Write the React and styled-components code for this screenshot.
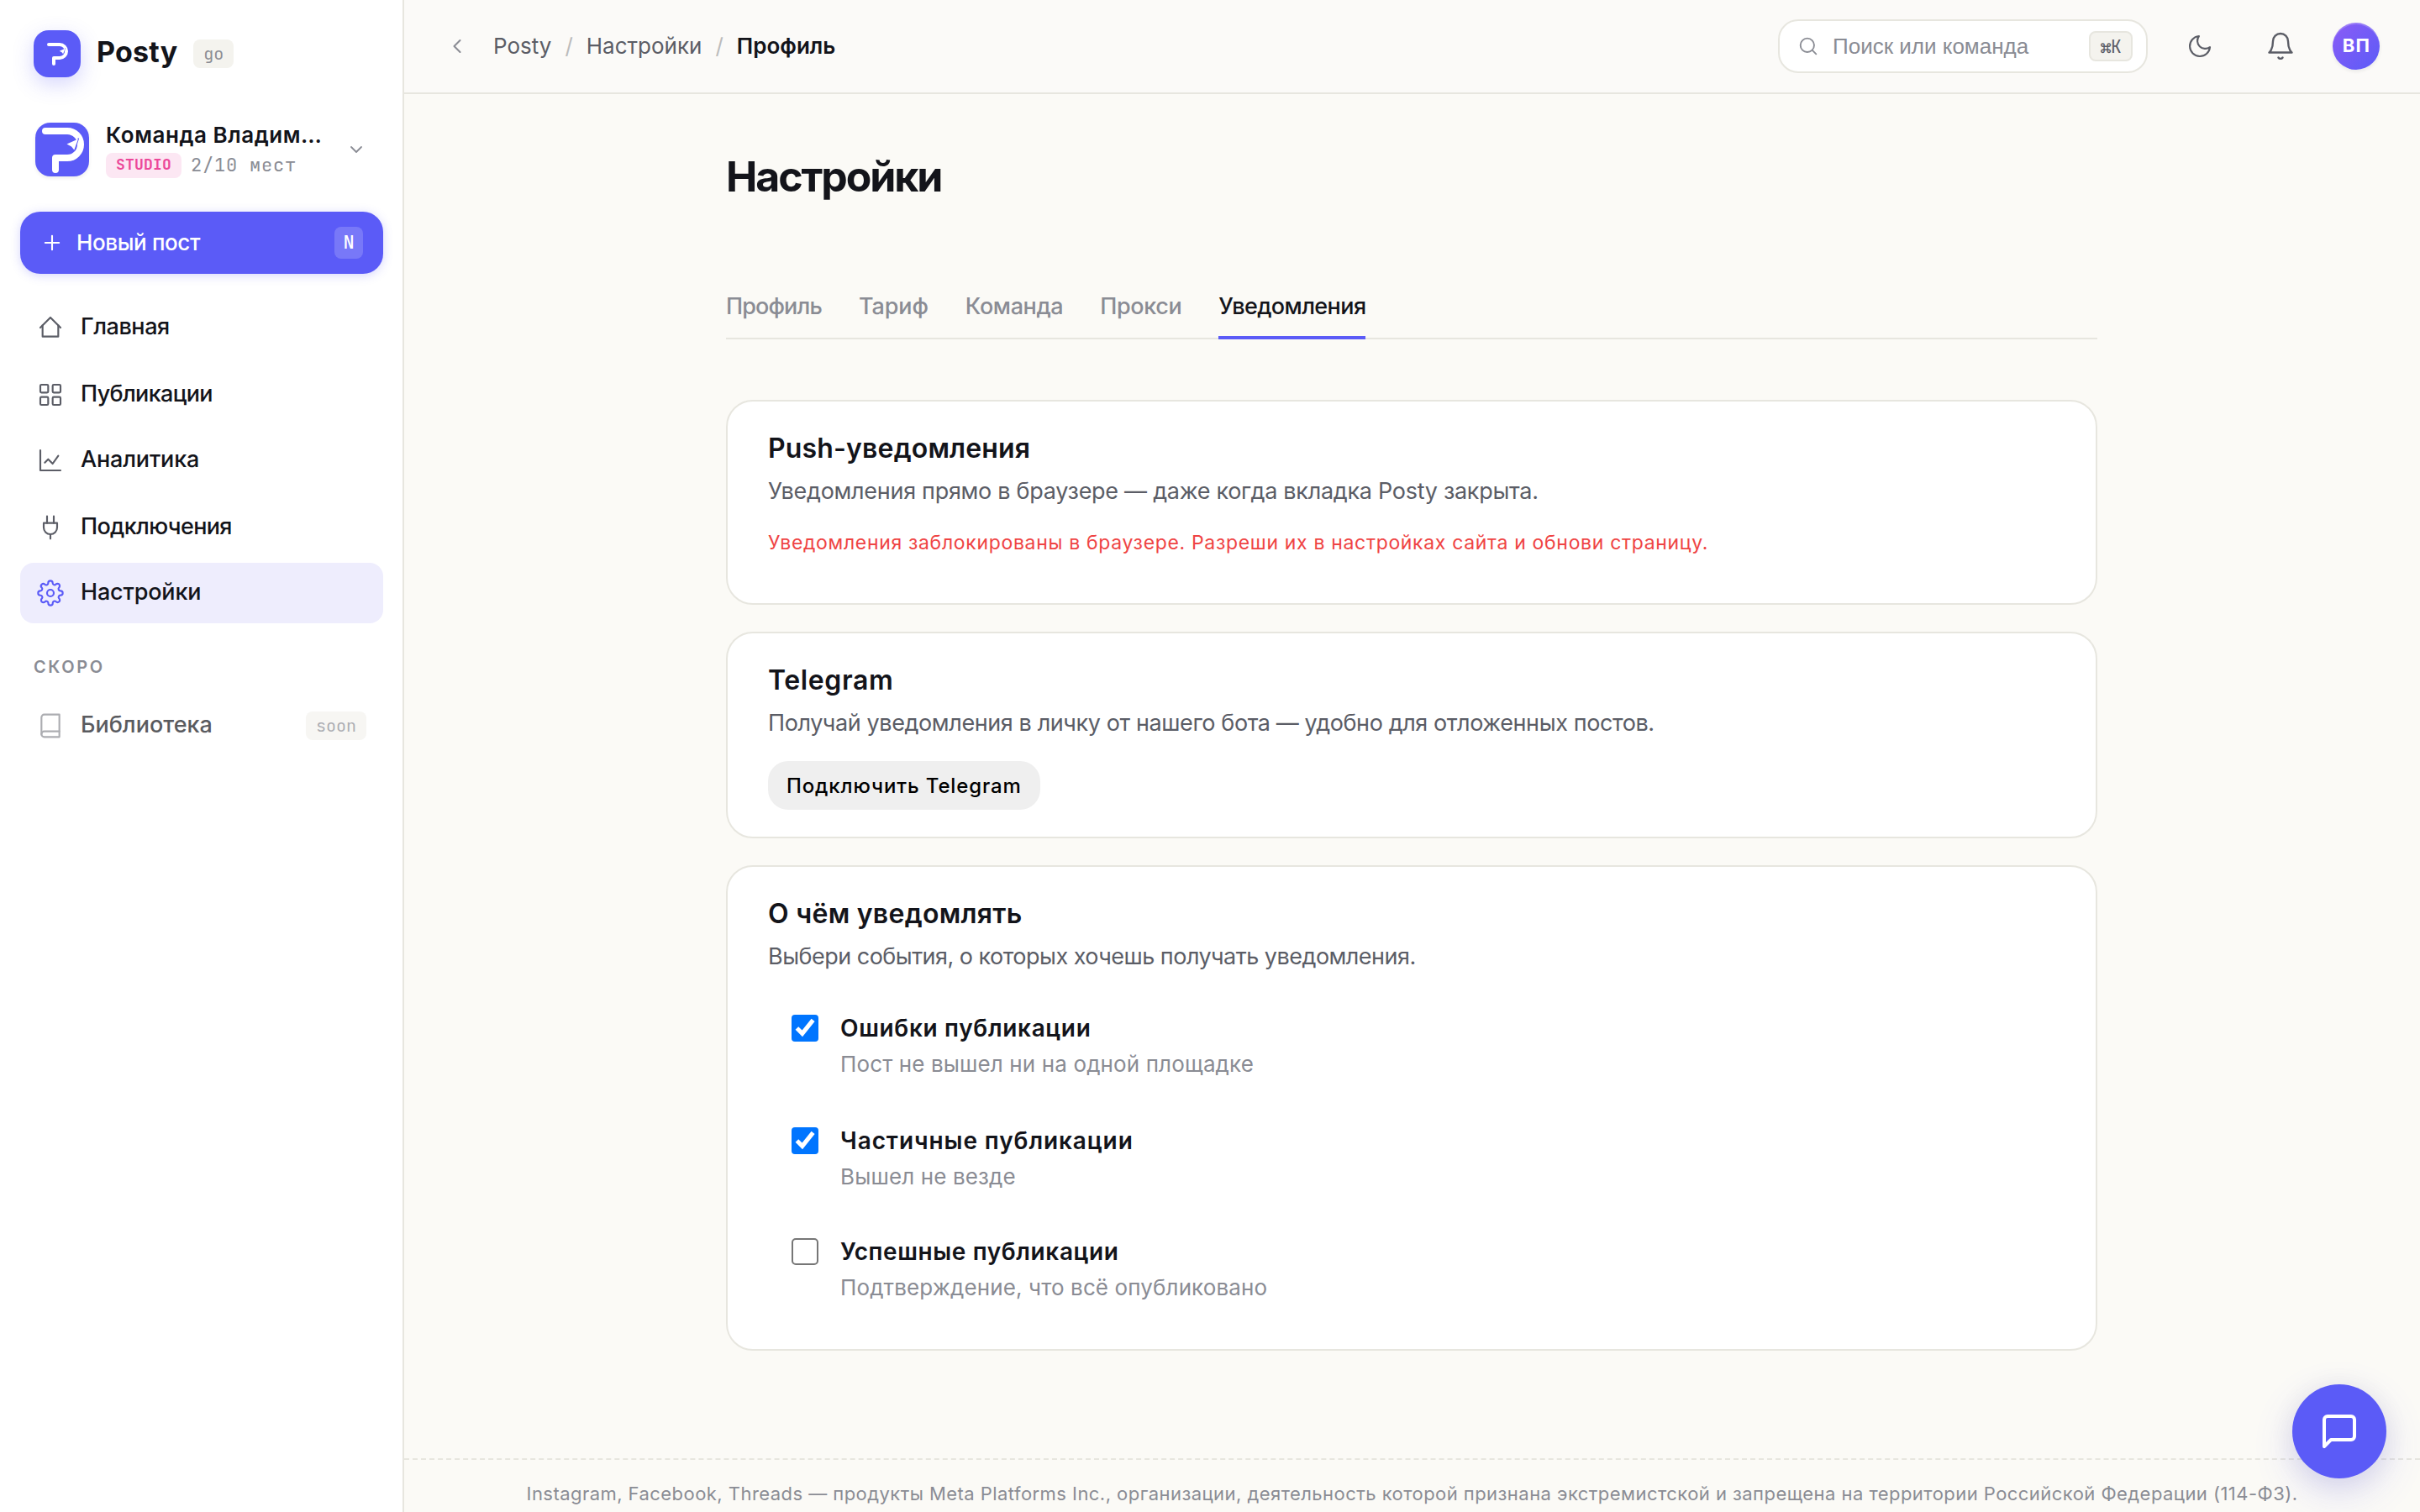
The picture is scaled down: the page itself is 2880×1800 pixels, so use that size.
import React from "react";

import styled, { createGlobalStyle } from "styled-components";

const GlobalStyle = createGlobalStyle`
  * {
    box-sizing: border-box;
  }
  body {
    margin: 0;
    background: #fbfaf6;
    color: #13141a;
    font-family: Inter, "Liberation Sans", sans-serif;
    font-size: 27px;
  }
`;

const mono = `"JetBrains Mono", "Liberation Mono", monospace`;

const Layout = styled.div`
  display: flex;
  width: 2880px;
  height: 1800px;
  overflow: hidden;
`;

const Sidebar = styled.aside`
  width: 481px;
  flex-shrink: 0;
  padding: 36px 23px 0 24px;
  background: #fff;
  border-right: 2px solid #e7e6df;
`;

const Brand = styled.div`
  display: flex;
  align-items: center;
  height: 56px;
  padding-left: 16px;
`;

const LogoTile = styled.div`
  display: grid;
  place-items: center;
  flex-shrink: 0;
  width: ${(p) => p.$size}px;
  height: ${(p) => p.$size}px;
  border-radius: ${(p) => p.$radius}px;
  background: #5b5bf7;
  box-shadow: ${(p) => p.$shadow};
`;

const BrandName = styled.div`
  margin: -5px 19px 0 19px;
  font-size: 34px;
  font-weight: 700;
  letter-spacing: 0.2px;
`;

const Tag = styled.span`
  display: grid;
  place-items: center;
  height: 34px;
  padding: 0 12px;
  border-radius: 8px;
  background: #f4f3ee;
  color: #8a8c94;
  font-family: ${mono};
  font-size: 20px;
`;

const Team = styled.div`
  display: flex;
  align-items: center;
  height: 64px;
  margin-top: 54px;
  padding: 0 20px 0 18px;
`;

const TeamInfo = styled.div`
  flex: 1;
  margin-left: 20px;
  padding-top: 1px;
`;

const TeamName = styled.div`
  font-size: 26px;
  font-weight: 600;
  line-height: 30px;
  letter-spacing: 0.54px;
  white-space: nowrap;
`;

const TeamMeta = styled.div`
  display: flex;
  align-items: center;
  gap: 11px;
  margin-top: 6px;
  color: #8a8c94;
  font-family: ${mono};
  font-size: 22px;
  line-height: 30px;
  letter-spacing: 0.8px;
`;

const Plan = styled.span`
  height: 30px;
  padding: 0 12px;
  border-radius: 8px;
  background: #fce7f3;
  color: #ec4899;
  font-size: 18px;
  font-weight: 700;
  line-height: 27px;
  letter-spacing: 0.2px;
`;

const NewPost = styled.button`
  display: flex;
  align-items: center;
  width: 432px;
  height: 74px;
  margin-top: 42px;
  padding: 0 24px;
  border: 0;
  border-radius: 24px;
  background: #5b5bf7;
  box-shadow: 0 2px 12px rgba(91, 91, 247, 0.25);
  color: #fff;
  font: 500 26px Inter, sans-serif;
  letter-spacing: -0.38px;

  span {
    flex: 1;
    margin: -2px 0 0 15px;
    text-align: left;
  }
`;

const Key = styled.kbd`
  display: grid;
  place-items: center;
  width: 34px;
  height: 38px;
  padding-bottom: 2px;
  border-radius: 8px;
  background: rgba(255, 255, 255, 0.18);
  font-family: ${mono};
  font-size: 22px;
  font-weight: 500;
`;

const Nav = styled.nav`
  display: grid;
  grid-template-rows: 80px 78px 80px 78px 72px;
  margin-top: 28px;
`;

const NavItem = styled.a`
  display: flex;
  align-items: center;
  gap: 20px;
  height: 72px;
  padding: 0 20px;
  border-radius: 16px;
  background: ${(p) => (p.$active ? "#eeedfd" : "transparent")};
  font-weight: 500;
  color: ${(p) => (p.$soon ? "#5a5b5f" : "#13141a")};

  svg {
    color: ${(p) => (p.$active ? "#5b5bf7" : "#5b5d66")};
    opacity: ${(p) => (p.$soon ? 0.5 : 1)};
  }
  ${Tag} {
    font-weight: 400;
    opacity: 0.7;
  }
`;

const NavText = styled.span`
  flex: 1;
  margin-top: -4px;
  letter-spacing: ${(p) => p.$track}px;
`;

const NavLabel = styled.div`
  margin: 38px 0 20px;
  padding-left: 16px;
  color: #8a8c94;
  font-size: 20px;
  font-weight: 600;
  line-height: 28px;
  letter-spacing: 2.6px;
`;

const Main = styled.div`
  display: flex;
  flex: 1;
  flex-direction: column;
`;

const Topbar = styled.header`
  display: flex;
  align-items: center;
  height: 112px;
  padding: 0 48px 0 49px;
  background: #fbfaf8;
  border-bottom: 2px solid #e7e6df;
`;

const Crumbs = styled.div`
  display: flex;
  flex: 1;
  gap: 16px;
  margin: -2px 0 0 29px;
  color: #5b5d66;
  font-size: 26px;

  i {
    color: #bcbcbc;
    font-style: normal;
  }
  b {
    color: #13141a;
    font-weight: 600;
  }
`;

const Search = styled.div`
  display: flex;
  align-items: center;
  width: 440px;
  height: 64px;
  padding: 0 16px 0 20px;
  border: 2px solid #e7e6df;
  border-radius: 24px;
  background: #fff;
  color: #8a8c94;
  font-family: "Liberation Sans", Arial, sans-serif;
  font-size: 26px;

  span {
    flex: 1;
    margin-left: 15px;
  }
`;

const SearchKey = styled.kbd`
  display: grid;
  place-items: center;
  width: 52px;
  height: 36px;
  border: 2px solid #e7e6df;
  border-radius: 8px;
  background: #f4f3ee;
  color: #5b5d66;
  font-family: ${mono};
  font-size: 21px;
  letter-spacing: -0.4px;
`;

const IconButton = styled.button`
  display: grid;
  place-items: center;
  width: 72px;
  height: 72px;
  margin-left: ${(p) => p.$gap}px;
  padding: 0;
  border: 0;
  background: none;
  color: #5b5d66;
`;

const Avatar = styled.div`
  display: grid;
  place-items: center;
  width: 56px;
  height: 56px;
  margin-left: 26px;
  padding: 0 0 3px 1px;
  border-radius: 50%;
  background: linear-gradient(135deg, #8b5cf6, #5b5bf7);
  box-shadow: 0 2px 4px rgba(19, 20, 26, 0.08), inset 0 2px 0 rgba(255, 255, 255, 0.2);
  color: #fff;
  font-size: 22px;
  font-weight: 700;
  letter-spacing: 1.2px;
`;

const Content = styled.main`
  display: flex;
  flex-direction: column;
  width: 1632px;
  height: 1624px;
  margin-left: 383px;
  padding-top: 68px;
`;

const Title = styled.h1`
  margin: 0;
  font-size: 50px;
  font-weight: 700;
  line-height: 60px;
  letter-spacing: -2.1px;
`;

const Tabs = styled.div`
  display: flex;
  gap: 44px;
  height: 70px;
  margin: 94px 0 72px;
  border-bottom: 2px solid #e7e6df;
`;

const Tab = styled.a`
  height: 70px;
  border-bottom: 4px solid ${(p) => (p.$active ? "#5b5bf7" : "transparent")};
  color: ${(p) => (p.$active ? "#13141a" : "#8a8c94")};
  font-weight: 500;
  line-height: 62px;
  letter-spacing: ${(p) => p.$track}px;
`;

const Card = styled.section`
  height: ${(p) => p.$height}px;
  margin-bottom: 32px;
  padding: 34px 48px;
  border: 2px solid #e7e6df;
  border-radius: 32px;
  background: #fff;
`;

const CardTitle = styled.h2`
  margin: 0;
  font-size: 32px;
  font-weight: 600;
  line-height: 44px;
  letter-spacing: ${(p) => p.$track}px;
`;

const CardText = styled.p`
  margin: 8px 0 0;
  color: #5b5d66;
  line-height: 42px;
  letter-spacing: ${(p) => p.$track}px;
`;

const Warning = styled.div`
  margin-top: 22px;
  color: #ef4444;
  font-size: 23px;
  line-height: 36px;
  letter-spacing: 0.67px;
`;

const ConnectButton = styled.button`
  height: 58px;
  margin-top: 24px;
  padding: 0 22px;
  border: 0;
  border-radius: 24px;
  background: #efefef;
  color: #000;
  font: 500 24px Inter, sans-serif;
  letter-spacing: 0.87px;
`;

const Events = styled.div`
  display: grid;
  grid-template-rows: 134px 132px 100px;
  margin-top: 42px;
  padding-left: 28px;
`;

const EventRow = styled.label`
  display: flex;
  gap: 26px;

  input {
    zoom: 2;
    width: 16px;
    height: 16px;
    margin: 3px 0 0;
  }
`;

const EventTitle = styled.strong`
  display: block;
  font-size: 28px;
  font-weight: 600;
  line-height: 44px;
  letter-spacing: ${(p) => p.$track}px;
`;

const EventText = styled.small`
  display: block;
  color: #8a8c94;
  font-size: 26px;
  line-height: 42px;
  letter-spacing: 0.12px;
`;

const Footer = styled.footer`
  height: 64px;
  padding-top: 24px;
  border-top: 2px dashed #e7e6df;
  color: #8a8c94;
  font-size: 22px;
  line-height: 32px;
  letter-spacing: 0.45px;
  text-align: center;
  white-space: nowrap;
`;

const ChatButton = styled.button`
  position: fixed;
  right: 40px;
  bottom: 40px;
  display: grid;
  place-items: center;
  width: 112px;
  height: 112px;
  border: 0;
  border-radius: 50%;
  background: #5b5bf7;
  box-shadow: 0 16px 48px rgba(91, 91, 247, 0.2), 0 4px 40px rgba(19, 20, 26, 0.08);
  color: #fff;
`;

const ICONS = {
  home: ["M3 12l9-9 9 9", "M5 10v10h14V10"],
  grid: [
    "M4 3h5a1 1 0 0 1 1 1v5a1 1 0 0 1-1 1H4a1 1 0 0 1-1-1V4a1 1 0 0 1 1-1z",
    "M15 3h5a1 1 0 0 1 1 1v5a1 1 0 0 1-1 1h-5a1 1 0 0 1-1-1V4a1 1 0 0 1 1-1z",
    "M4 14h5a1 1 0 0 1 1 1v5a1 1 0 0 1-1 1H4a1 1 0 0 1-1-1v-5a1 1 0 0 1 1-1z",
    "M15 14h5a1 1 0 0 1 1 1v5a1 1 0 0 1-1 1h-5a1 1 0 0 1-1-1v-5a1 1 0 0 1 1-1z",
  ],
  chart: ["M3 3v18h18", "M7 14l3-3 4 4 5-7"],
  plug: ["M9 2v6M15 2v6", "M6 8h12v4a6 6 0 0 1-12 0V8z", "M12 18v4"],
  gear: [
    "M12 9a3 3 0 1 0 0 6 3 3 0 0 0 0-6z",
    "M19.4 15a1.65 1.65 0 0 0 .33 1.82l.06.06a2 2 0 1 1-2.83 2.83l-.06-.06a1.65 1.65 0 0 0-1.82-.33 1.65 1.65 0 0 0-1 1.51V21a2 2 0 0 1-4 0v-.09A1.65 1.65 0 0 0 9 19.4a1.65 1.65 0 0 0-1.82.33l-.06.06a2 2 0 1 1-2.83-2.83l.06-.06a1.65 1.65 0 0 0 .33-1.82 1.65 1.65 0 0 0-1.51-1H3a2 2 0 0 1 0-4h.09A1.65 1.65 0 0 0 4.6 9a1.65 1.65 0 0 0-.33-1.82l-.06-.06a2 2 0 1 1 2.83-2.83l.06.06a1.65 1.65 0 0 0 1.82.33H9a1.65 1.65 0 0 0 1-1.51V3a2 2 0 0 1 4 0v.09a1.65 1.65 0 0 0 1 1.51 1.65 1.65 0 0 0 1.82-.33l.06-.06a2 2 0 1 1 2.83 2.83l-.06.06a1.65 1.65 0 0 0-.33 1.82V9a1.65 1.65 0 0 0 1.51 1H21a2 2 0 0 1 0 4h-.09a1.65 1.65 0 0 0-1.51 1z",
  ],
  book: [
    "M4 19.5A2.5 2.5 0 0 1 6.5 17H20",
    "M6.5 2H20v20H6.5A2.5 2.5 0 0 1 4 19.5v-15A2.5 2.5 0 0 1 6.5 2z",
  ],
  plus: ["M12 5v14M5 12h14"],
  down: ["M6 9l6 6 6-6"],
  back: ["M15 18l-6-6 6-6"],
  search: ["M11 4a7 7 0 1 0 0 14 7 7 0 0 0 0-14z", "M20 20l-3.8-3.8"],
  moon: ["M21 12.8A9 9 0 1 1 11.2 3a7 7 0 0 0 9.8 9.8z"],
  bell: ["M18 8a6 6 0 0 0-12 0c0 7-3 9-3 9h18s-3-2-3-9", "M13.7 21a2 2 0 0 1-3.4 0"],
  chat: ["M21 15a2 2 0 0 1-2 2H7l-4 4V5a2 2 0 0 1 2-2h14a2 2 0 0 1 2 2z"],
};

function Icon({ name, size = 32, stroke = 1.6, color }) {
  return (
    <svg
      width={size}
      height={size}
      viewBox="0 0 24 24"
      fill="none"
      stroke={color || "currentColor"}
      strokeWidth={stroke}
      strokeLinecap="round"
      strokeLinejoin="round"
    >
      {ICONS[name].map((d) => (
        <path d={d} key={d} />
      ))}
    </svg>
  );
}

function LogoMark({ size }) {
  return (
    <svg width={size} height={size} viewBox="0 0 64 64" fill="none">
      <path
        d="M12 10h26a16 16 0 0 1 0 32H24v14"
        stroke="#fff"
        strokeWidth="8"
        strokeLinecap="round"
        strokeLinejoin="round"
      />
      <path d="M51.5 18.5L46.5 33.5" stroke="#5b5bf7" strokeWidth="1.4" />
      <path d="M37.5 25.5L51 19.5L46.3 32.5L43 28.5z" fill="#fff" />
    </svg>
  );
}

// letter spacing is tuned for each label
const NAV = [
  { icon: "home", label: "Главная", track: -0.45 },
  { icon: "grid", label: "Публикации", track: -0.66 },
  { icon: "chart", label: "Аналитика", track: -0.16 },
  { icon: "plug", label: "Подключения", track: -0.66 },
  { icon: "gear", label: "Настройки", track: -0.16, active: true },
];

const TABS = [
  { label: "Профиль", track: -0.87 },
  { label: "Тариф", track: -0.1 },
  { label: "Команда", track: -0.39 },
  { label: "Прокси", track: -0.4 },
  { label: "Уведомления", track: -0.6, active: true },
];

const EVENTS = [
  {
    title: "Ошибки публикации",
    text: "Пост не вышел ни на одной площадке",
    track: 0.66,
    on: true,
  },
  { title: "Частичные публикации", text: "Вышел не везде", track: 0.91, on: true },
  {
    title: "Успешные публикации",
    text: "Подтверждение, что всё опубликовано",
    track: 0.6,
    on: false,
  },
];

function App() {
  return (
    <Layout>
      <GlobalStyle />
      <Sidebar>
        <Brand>
          <LogoTile $size={56} $radius={18} $shadow="0 8px 24px rgba(91, 91, 247, 0.25)">
            <LogoMark size={32} />
          </LogoTile>
          <BrandName>Posty</BrandName>
          <Tag>go</Tag>
        </Brand>
        <Team>
          <LogoTile $size={64} $radius={18} $shadow="0 2px 4px rgba(19, 20, 26, 0.08)">
            <LogoMark size={64} />
          </LogoTile>
          <TeamInfo>
            <TeamName>Команда Владим…</TeamName>
            <TeamMeta>
              <Plan>STUDIO</Plan>2/10 мест
            </TeamMeta>
          </TeamInfo>
          <Icon name="down" size={24} stroke={1.8} color="#8a8c94" />
        </Team>
        <NewPost>
          <Icon name="plus" size={28} stroke={1.8} />
          <span>Новый пост</span>
          <Key>N</Key>
        </NewPost>
        <Nav>
          {NAV.map((item) => (
            <NavItem key={item.label} $active={item.active}>
              <Icon name={item.icon} />
              <NavText $track={item.track}>{item.label}</NavText>
            </NavItem>
          ))}
        </Nav>
        <NavLabel>СКОРО</NavLabel>
        <NavItem $soon>
          <Icon name="book" />
          <NavText $track={0}>Библиотека</NavText>
          <Tag>soon</Tag>
        </NavItem>
      </Sidebar>
      <Main>
        <Topbar>
          <Icon name="back" size={28} stroke={1.8} color="#8a8c94" />
          <Crumbs>
            <span>Posty</span>
            <i>/</i>
            <span>Настройки</span>
            <i>/</i>
            <b>Профиль</b>
          </Crumbs>
          <Search>
            <Icon name="search" size={28} />
            <span>Поиск или команда</span>
            <SearchKey>⌘K</SearchKey>
          </Search>
          <IconButton $gap={26}>
            <Icon name="moon" size={32} />
          </IconButton>
          <IconButton $gap={24}>
            <Icon name="bell" size={36} />
          </IconButton>
          <Avatar>ВП</Avatar>
        </Topbar>
        <Content>
          <Title>Настройки</Title>
          <Tabs>
            {TABS.map((tab) => (
              <Tab key={tab.label} $active={tab.active} $track={tab.track}>
                {tab.label}
              </Tab>
            ))}
          </Tabs>
          <Card $height={244}>
            <CardTitle $track={0.16}>Push-уведомления</CardTitle>
            <CardText $track={-0.29}>
              Уведомления прямо в браузере — даже когда вкладка Posty закрыта.
            </CardText>
            <Warning>
              Уведомления заблокированы в браузере. Разреши их в настройках сайта и обнови страницу.
            </Warning>
          </Card>
          <Card $height={246}>
            <CardTitle $track={0.61}>Telegram</CardTitle>
            <CardText $track={-0.4}>
              Получай уведомления в личку от нашего бота — удобно для отложенных постов.
            </CardText>
            <ConnectButton>Подключить Telegram</ConnectButton>
          </Card>
          <Card $height={578}>
            <CardTitle $track={0.27}>О чём уведомлять</CardTitle>
            <CardText $track={-0.52}>
              Выбери события, о которых хочешь получать уведомления.
            </CardText>
            <Events>
              {EVENTS.map((event) => (
                <EventRow key={event.title}>
                  <input type="checkbox" defaultChecked={event.on} />
                  <div>
                    <EventTitle $track={event.track}>{event.title}</EventTitle>
                    <EventText>{event.text}</EventText>
                  </div>
                </EventRow>
              ))}
            </Events>
          </Card>
        </Content>
        <Footer>
          Instagram, Facebook, Threads — продукты Meta Platforms Inc., организации, деятельность
          которой признана экстремистской и запрещена на территории Российской Федерации (114-ФЗ).
        </Footer>
      </Main>
      <ChatButton>
        <Icon name="chat" size={48} stroke={2} />
      </ChatButton>
    </Layout>
  );
}

export default App;
